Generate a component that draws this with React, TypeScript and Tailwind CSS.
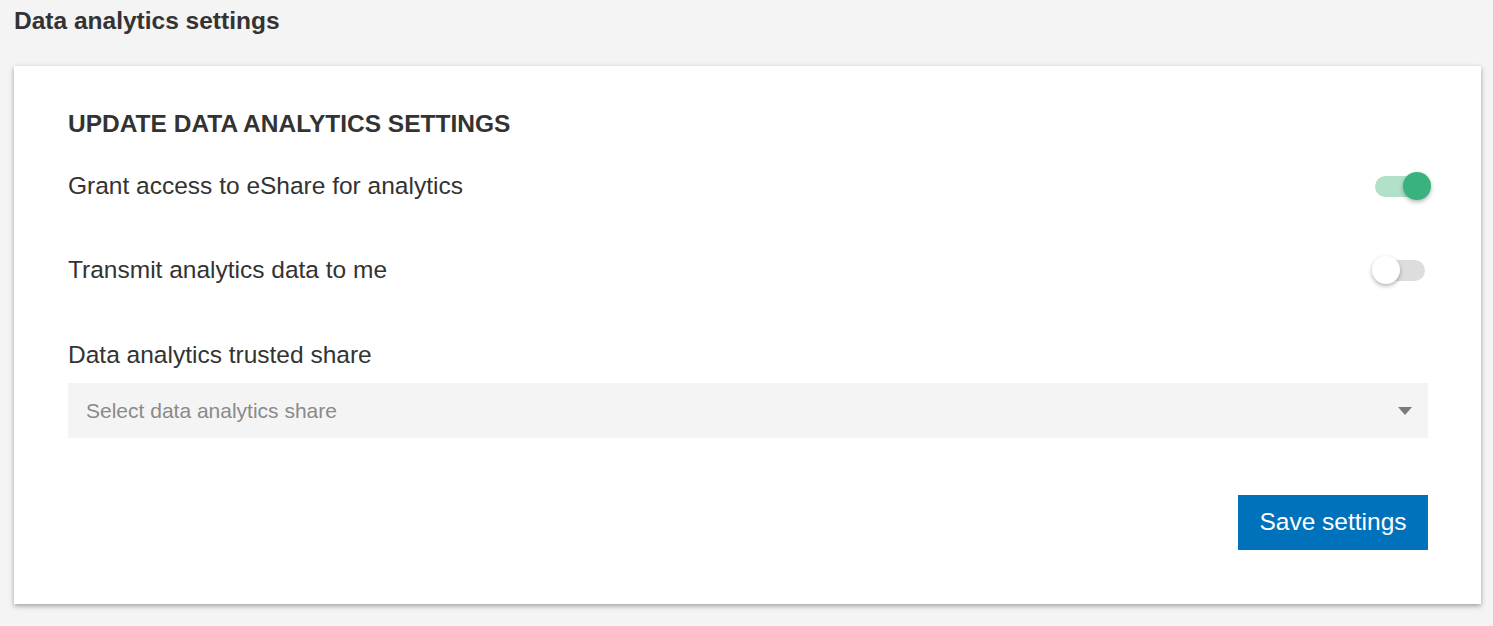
import { useState } from "react";

const Toggle = ({ on, onChange }: { on: boolean; onChange: () => void }) => {
  return (
    <button
      type="button"
      onClick={onChange}
      className="relative flex h-[28px] w-[56px] items-center"
    >
      <span
        className={`ml-[3px] h-[21px] w-[50px] rounded-full ${
          on ? "bg-[#b1e1c9]" : "bg-[#dddddd]"
        }`}
      />
      <span
        className={`absolute top-0 h-[28px] w-[28px] rounded-full shadow-[0_2px_4px_rgba(0,0,0,0.3)] ${
          on ? "left-[31px] bg-[#38b27e]" : "left-0 bg-white"
        }`}
      />
    </button>
  );
};

export default function App() {
  const [grant, setGrant] = useState(true);
  const [transmit, setTransmit] = useState(false);

  return (
    <div className="min-h-[626px] bg-[#f4f4f4] px-[14px] pt-[7px] font-['Liberation_Sans',Arial,sans-serif] text-[#333333]">
      <h1 className="text-[24.5px] font-bold leading-[28px]">Data analytics settings</h1>

      <div className="mt-[31px] w-[1467px] bg-white pl-[54px] pr-[53px] pt-[44px] pb-[54px] shadow-[0_2px_5px_rgba(0,0,0,0.35)]">
        <h2 className="text-[24.5px] font-bold leading-[28px]">UPDATE DATA ANALYTICS SETTINGS</h2>

        <div className="mt-[34px] flex items-center justify-between">
          <span className="text-[24.5px] leading-[28px]">Grant access to eShare for analytics</span>
          <Toggle on={grant} onChange={() => setGrant(!grant)} />
        </div>

        <div className="mt-[56px] flex items-center justify-between">
          <span className="text-[24.5px] leading-[28px]">Transmit analytics data to me</span>
          <Toggle on={transmit} onChange={() => setTransmit(!transmit)} />
        </div>

        <div className="mt-[57px] text-[24.5px] leading-[28px]">Data analytics trusted share</div>

        <div className="mt-[14px] flex h-[55px] items-center justify-between bg-[#f4f4f4] pl-[18px] pr-[16px]">
          <span className="text-[21px] text-[#8a8a8a]">Select data analytics share</span>
          <svg width="14" height="8" viewBox="0 0 14 8">
            <path d="M0 0h14L7 8z" fill="#7a7a7a" />
          </svg>
        </div>

        <div className="mt-[57px] flex justify-end">
          <button
            type="button"
            className="h-[55px] w-[190px] bg-[#0072bc] text-[24.5px] text-white"
          >
            Save settings
          </button>
        </div>
      </div>
    </div>
  );
}
